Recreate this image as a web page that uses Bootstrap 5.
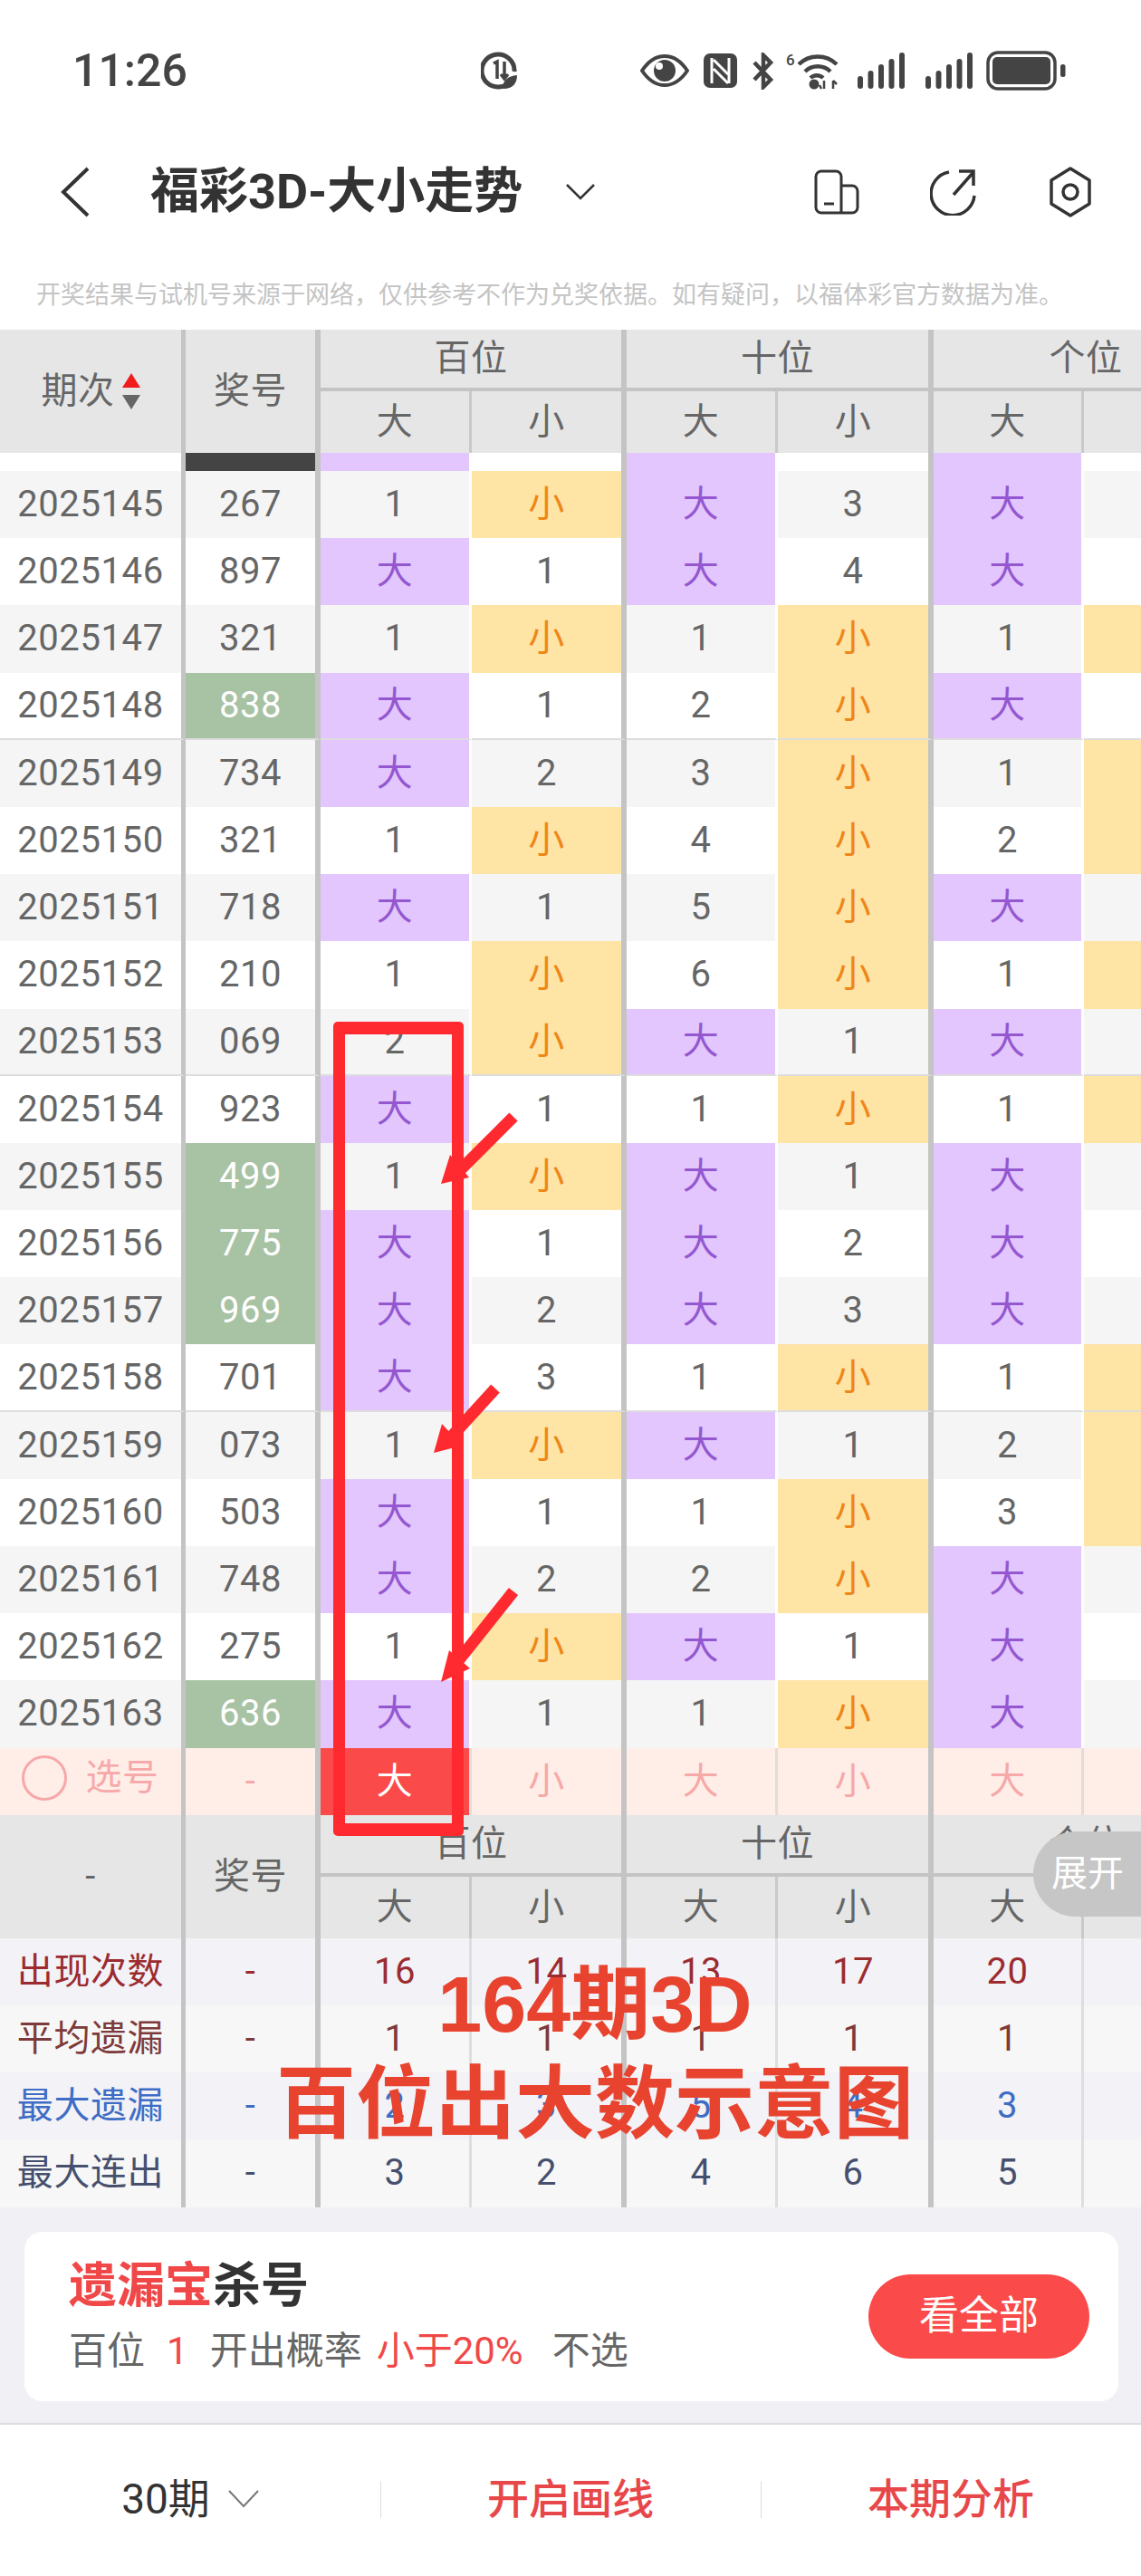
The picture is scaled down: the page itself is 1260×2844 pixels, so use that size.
<!DOCTYPE html>
<html lang="zh-CN">

<head>
  <meta charset="UTF-8">
  <meta name="viewport" content="width=device-width, initial-scale=1, shrink-to-fit=no">
  <title>福彩3D-大小走势</title>
  <link href="https://cdn.jsdelivr.net/npm/bootstrap@5.3.0/dist/css/bootstrap.min.css" rel="stylesheet">
  <style>
    body {
      font-family: Roboto, "Noto Sans CJK SC", sans-serif;
      background-color: #fff;
      color: #333;
    }

    .screen {
      position: relative;
      width: 1260px;
      height: 2844px;
      overflow: hidden;
    }

    /* status bar */
    .status-bar {
      height: 156px;
      padding-left: 80px;
      color: #444;
    }

    .status-time {
      font-size: 50px;
      font-weight: 500;
      line-height: 1;
      width: 451px;
    }

    .status-bar svg {
      display: block;
      flex: none;
    }

    /* nav bar */
    .top-nav {
      height: 112px;
      padding-left: 67px;
    }

    .top-title {
      font-size: 54px;
      font-weight: 700;
      line-height: 1;
      color: #333;
      margin-left: 67px;
      margin-right: 48px;
    }

    .top-actions {
      margin-left: auto;
      margin-right: 53px;
      gap: 78px;
    }

    .disclaimer {
      height: 96px;
      padding: 38px 0 18px 40px;
      font-size: 27px;
      line-height: 40px;
      color: #c4c4c4;
      white-space: nowrap;
    }

    /* trend table */
    .trend-wrap {
      width: 1260px;
      overflow: hidden;
    }

    .trend-table {
      width: 1367px;
      table-layout: fixed;
      border-collapse: separate;
      border-spacing: 0;
      font-size: 40px;
      line-height: 1;
      text-align: center;
      color: #666;
    }

    .trend-table th,
    .trend-table td {
      padding: 0;
      height: 74.2px;
      vertical-align: middle;
      text-align: center;
      font-weight: 400;
      color: #666;
      background-clip: padding-box;
      white-space: nowrap;
      letter-spacing: .6px;
    }

    .trend-table .edge-s { border-right: 5px solid #c4c4c4; }
    .trend-table .edge-m { border-right: 6px solid #c4c4c4; }
    .trend-table .edge-t { border-right: 3px solid transparent; }

    .trend-table th {
      background-color: #e6e6e6;
      height: 68px;
    }

    .trend-table th.edge-t { border-right-color: #c9c9c9; }
    .trend-table th.group-cell { border-bottom: 4px solid #c4c4c4; }
    .trend-table tr.row-gray td { background-color: #f5f5f5; }
    .trend-table tr.row-white td { background-color: #fff; }
    .trend-table tr.row-cut td { height: 20px; }
    .trend-table tr.row-end td { border-bottom: 2px solid #ddd; }
    .trend-table tr.row-pick td { background-color: #ffeee8; color: #f7a8a8; }
    .trend-table tr.row-pick td.edge-t { border-right-color: #e3dcd9; }
    .trend-table tr.row-s1 td { background-color: #f2f2f7; color: #9c2b2f; }
    .trend-table tr.row-s2 td { background-color: #f7f7f7; color: #7d3a3a; }
    .trend-table tr.row-s3 td { background-color: #f2f2f7; color: #3f6cc4; }
    .trend-table tr.row-s4 td { background-color: #f7f7f7; color: #46506e; }
    .trend-table tr.row-s1 td.edge-t,
    .trend-table tr.row-s2 td.edge-t,
    .trend-table tr.row-s3 td.edge-t,
    .trend-table tr.row-s4 td.edge-t { border-right-color: #dedede; }

    .trend-table tr td.cell-big { background-color: #e2c6fd; color: #9457d0; }
    .trend-table tr td.cell-small { background-color: #fee4a5; color: #ee8618; }
    .trend-table tr td.cell-green { background-color: #a8c2a4; color: #fff; }
    .trend-table tr td.cell-dark { background-color: #444; }
    .trend-table tr td.cell-picked { background-color: #fb4a4a; color: #fff; }

    .sort-arrows {
      gap: 8px;
      margin-left: 8px;
    }

    .tri-up {
      width: 0;
      height: 0;
      border-left: 10px solid transparent;
      border-right: 10px solid transparent;
      border-bottom: 16px solid #f01c1c;
    }

    .tri-down {
      width: 0;
      height: 0;
      border-left: 10px solid transparent;
      border-right: 10px solid transparent;
      border-top: 16px solid #666;
    }

    .pick-ring {
      width: 50px;
      height: 50px;
      border: 3px solid #f7a8a8;
      border-radius: 50%;
      margin-right: 20px;
    }

    /* kill number card */
    .kill-zone {
      height: 240px;
      padding: 27px 25px 0 27px;
      background-color: #f1f1f5;
      border-bottom: 2px solid #ddd;
    }

    .kill-card {
      height: 187px;
      padding: 0 32px 0 49px;
      border: 0;
      border-radius: 20px;
    }

    .kill-title {
      font-size: 53px;
      font-weight: 700;
      line-height: 1;
      color: #333;
      margin-bottom: 24px;
    }

    .kill-red { color: #f04848; }

    .kill-line {
      font-size: 42px;
      line-height: 1;
      color: #666;
      white-space: nowrap;
    }

    .kill-btn {
      width: 244px;
      height: 93px;
      padding: 0;
      font-size: 44px;
      line-height: 1;
      color: #fff;
      background-color: #fb4a4a;
      border: 0;
      border-radius: 47px;
    }

    /* footer */
    .bottom-bar {
      height: 165px;
    }

    .bottom-item {
      width: 420px;
      font-size: 46px;
      line-height: 1;
      font-weight: 500;
      color: #e8474a;
    }

    .bottom-item + .bottom-item::before {
      content: "";
      position: absolute;
      left: 0;
      top: 62px;
      height: 41px;
      border-left: 1px solid #ddd;
    }

    .bottom-period {
      font-weight: 400;
      color: #333;
      gap: 20px;
    }

    /* things laid over the page */
    .expand-tag {
      position: absolute;
      left: 1141px;
      top: 2022px;
      width: 119px;
      height: 94px;
      padding-left: 20px;
      font-size: 40px;
      line-height: 94px;
      color: #fff;
      background-color: #c6c6c6;
      border-radius: 47px 0 0 47px;
    }

    .mark-box {
      position: absolute;
      left: 368px;
      top: 1128px;
      width: 144px;
      height: 899px;
      border: 14px solid #ff2a30;
      border-width: 14px 13px;
      border-radius: 5px;
    }

    .mark-arrows {
      position: absolute;
      left: 0;
      top: 0;
    }

    .mark-text {
      position: absolute;
      left: 0;
      top: 2158px;
      width: 1314px;
      font-size: 88px;
      font-weight: 700;
      line-height: 110px;
      text-align: center;
      color: #e8432f;
      font-family: "Liberation Sans", "Noto Sans CJK SC", sans-serif;
    }
  </style>
</head>

<body>
  <div class="screen">

    <!-- status bar -->
    <div class="status-bar d-flex align-items-center">
      <div class="status-time">11:26</div>
      <svg width="41" height="42" viewBox="0 0 41 42">
        <path d="M29 36A18 18 0 1 1 37 22" fill="none" stroke="#444" stroke-width="5"/>
        <path d="M14 13l4-2v19M26 11v18M22 25l4 5 4-5" fill="none" stroke="#444" stroke-width="3.5"/>
        <path d="M25 41c-2-9 5-14 15-15 0 9-5 15-15 15z" fill="#444"/>
      </svg>
      <svg class="ms-auto" style="margin-left:135px!important" width="54" height="36" viewBox="0 0 54 36">
        <path d="M2 18C10 6 18 2 27 2s17 4 25 16c-8 12-16 16-25 16S10 30 2 18z" fill="none" stroke="#444" stroke-width="4"/>
        <circle cx="27" cy="18" r="12" fill="#444"/>
        <circle cx="21" cy="13" r="4" fill="#fff"/>
      </svg>
      <svg style="margin-left:16px" width="37" height="38" viewBox="0 0 37 38">
        <rect width="37" height="38" rx="7" fill="#444"/>
        <path d="M9 5v28M28 5v28M11 7l16 16M11 17l16 16" fill="none" stroke="#fff" stroke-width="3"/>
      </svg>
      <svg style="margin-left:16px" width="26" height="41" viewBox="0 0 26 41">
        <path d="M3 30L21 11 13 3v35l8-8L3 11" fill="none" stroke="#444" stroke-width="4.5"/>
      </svg>
      <svg style="margin-left:12px" width="58" height="42" viewBox="0 0 58 42">
        <path d="M14 14a30 30 0 0 1 42 0M21 22a20 20 0 0 1 28 0M27 29a10 10 0 0 1 14 0" fill="none" stroke="#444" stroke-width="4.5"/>
        <circle cx="31" cy="36" r="5.5" fill="#444"/>
        <path d="M42 32v9M39 41l-2-4M52 32v9M52 32l4 4" fill="none" stroke="#444" stroke-width="2.5"/>
        <text x="0" y="15" font-size="17" font-family="Roboto" font-weight="500" fill="#444">6</text>
      </svg>
      <svg style="margin-left:21px" width="52" height="40" viewBox="0 0 52 40">
        <rect x="0" y="26" width="6" height="14" rx="3" fill="#444"/>
        <rect x="11.500" y="20" width="6" height="20" rx="3" fill="#444"/>
        <rect x="23" y="13" width="6" height="27" rx="3" fill="#444"/>
        <rect x="34.500" y="7" width="6" height="33" rx="3" fill="#444"/>
        <rect x="46" y="0" width="6" height="40" rx="3" fill="#444"/>
      </svg>
      <svg style="margin-left:23px" width="52" height="40" viewBox="0 0 52 40">
        <rect x="0" y="26" width="6" height="14" rx="3" fill="#444"/>
        <rect x="11.500" y="20" width="6" height="20" rx="3" fill="#444"/>
        <rect x="23" y="13" width="6" height="27" rx="3" fill="#444"/>
        <rect x="34.500" y="7" width="6" height="33" rx="3" fill="#444"/>
        <rect x="46" y="0" width="6" height="40" rx="3" fill="#444"/>
      </svg>
      <svg style="margin-left:15px" width="88" height="44" viewBox="0 0 88 44">
        <rect x="2" y="2" width="74" height="40" rx="11" fill="none" stroke="#444" stroke-width="3.500"/>
        <rect x="7" y="7" width="64" height="30" rx="5" fill="#444"/>
        <rect x="82" y="15" width="5.500" height="14" rx="2.500" fill="#444"/>
      </svg>
    </div>

    <!-- nav bar -->
    <div class="top-nav d-flex align-items-center">
      <svg width="32" height="56" viewBox="0 0 32 56">
        <path d="M30 2L3 28l27 26" fill="none" stroke="#333" stroke-width="4"/>
      </svg>
      <div class="top-title">福彩3D-大小走势</div>
      <svg width="32" height="18" viewBox="0 0 32 18">
        <path d="M1 1l15 15L31 1" fill="none" stroke="#333" stroke-width="2.500"/>
      </svg>
      <div class="top-actions d-flex align-items-center">
        <svg width="50" height="50" viewBox="0 0 50 50">
          <path d="M8 2h16a6 6 0 0 1 6 6v40H8a6 6 0 0 1-6-6V8a6 6 0 0 1 6-6zM30 18h12a6 6 0 0 1 6 6v18a6 6 0 0 1-6 6H30" fill="none" stroke="#333" stroke-width="3"/>
          <path d="M11 38h11" stroke="#333" stroke-width="3"/>
        </svg>
        <svg width="52" height="52" viewBox="0 0 52 52">
          <path d="M21 4A24 24 0 1 0 49 30M26 29L48 4M32 3h16v16" fill="none" stroke="#333" stroke-width="3.500"/>
        </svg>
        <svg width="50" height="56" viewBox="0 0 50 56">
          <path d="M25 2l21 13v26L25 54 4 41V15z" fill="none" stroke="#333" stroke-width="3.500" stroke-linejoin="round"/>
          <circle cx="25" cy="28" r="8" fill="none" stroke="#333" stroke-width="3.500"/>
        </svg>
      </div>
    </div>

    <div class="disclaimer">开奖结果与试机号来源于网络，仅供参考不作为兑奖依据。如有疑问，以福体彩官方数据为准。</div>

    <!-- table gets filled by the script below -->
    <div class="trend-wrap">
      <table class="table table-borderless mb-0 trend-table" id="trendTable"></table>
    </div>

    <!-- kill number card -->
    <div class="kill-zone">
      <div class="card kill-card flex-row align-items-center justify-content-between">
        <div>
          <div class="kill-title"><span class="kill-red">遗漏宝</span>杀号</div>
          <div class="kill-line d-flex">
            <span>百位</span>
            <span class="kill-red ms-4 me-4">1</span>
            <span>开出概率</span>
            <span class="kill-red ms-3">小于20%</span>
            <span class="ms-4 ps-2">不选</span>
          </div>
        </div>
        <button type="button" class="btn kill-btn">看全部</button>
      </div>
    </div>

    <!-- footer -->
    <div class="bottom-bar d-flex">
      <div class="bottom-item bottom-period d-flex align-items-center justify-content-center">
        <span>30期</span>
        <svg width="34" height="20" viewBox="0 0 34 20">
          <path d="M1 1l16 17L33 1" fill="none" stroke="#777" stroke-width="2"/>
        </svg>
      </div>
      <div class="bottom-item position-relative d-flex align-items-center justify-content-center">开启画线</div>
      <div class="bottom-item position-relative d-flex align-items-center justify-content-center">本期分析</div>
    </div>

    <!-- sidebar tag and the hand-drawn marks on top of the screenshot -->
    <div class="expand-tag">展开</div>
    <div class="mark-box"></div>
    <svg class="mark-arrows" width="1260" height="2844" viewBox="0 0 1260 2844">
      <g fill="none" stroke="#ff2a30" stroke-width="13">
        <path d="M567 1233L505 1295"/>
        <path d="M547 1533L495 1590"/>
        <path d="M567 1757L505 1835"/>
      </g>
      <g fill="#ff2a30">
        <path d="M487 1307L497 1275 518 1300z"/>
        <path d="M479 1604L488 1572 510 1596z"/>
        <path d="M487 1857L496 1822 519 1842z"/>
      </g>
    </svg>
    <div class="mark-text">164期3D<br>百位出大数示意图</div>
  </div>

  <script src="https://cdn.jsdelivr.net/npm/bootstrap@5.3.0/dist/js/bootstrap.bundle.min.js"></script>
  <script>
    // period, prize, green?, then hundreds big/small, tens big/small, ones big/small
    var trendRows = [
      ['2025145', '267', 0, '1', '小', '大', '3', '大', '1'],
      ['2025146', '897', 0, '大', '1', '大', '4', '大', '2'],
      ['2025147', '321', 0, '1', '小', '1', '小', '1', '小'],
      ['2025148', '838', 1, '大', '1', '2', '小', '大', '1'],
      ['2025149', '734', 0, '大', '2', '3', '小', '1', '小'],
      ['2025150', '321', 0, '1', '小', '4', '小', '2', '小'],
      ['2025151', '718', 0, '大', '1', '5', '小', '大', '1'],
      ['2025152', '210', 0, '1', '小', '6', '小', '1', '小'],
      ['2025153', '069', 0, '2', '小', '大', '1', '大', '1'],
      ['2025154', '923', 0, '大', '1', '1', '小', '1', '小'],
      ['2025155', '499', 1, '1', '小', '大', '1', '大', '1'],
      ['2025156', '775', 1, '大', '1', '大', '2', '大', '2'],
      ['2025157', '969', 1, '大', '2', '大', '3', '大', '3'],
      ['2025158', '701', 0, '大', '3', '1', '小', '1', '小'],
      ['2025159', '073', 0, '1', '小', '大', '1', '2', '小'],
      ['2025160', '503', 0, '大', '1', '1', '小', '3', '小'],
      ['2025161', '748', 0, '大', '2', '2', '小', '大', '1'],
      ['2025162', '275', 0, '1', '小', '大', '1', '大', '2'],
      ['2025163', '636', 1, '大', '1', '1', '小', '大', '3']
    ];

    var statRows = [
      ['row-s1', '出现次数', '16', '14', '13', '17', '20', '10'],
      ['row-s2', '平均遗漏', '1', '1', '1', '1', '1', '1'],
      ['row-s3', '最大遗漏', '2', '3', '5', '4', '3', '4'],
      ['row-s4', '最大连出', '3', '2', '4', '6', '5', '3']
    ];

    var valueEdges = ['edge-t', 'edge-m', 'edge-t', 'edge-m', 'edge-t', ''];

    function headRows(firstCell) {
      return `
        <tr>
          ${firstCell}
          <th rowspan="2" class="edge-m">奖号</th>
          <th colspan="2" class="edge-m group-cell">百位</th>
          <th colspan="2" class="edge-m group-cell">十位</th>
          <th colspan="2" class="group-cell">个位</th>
        </tr>
        <tr>
          <th class="edge-t">大</th><th class="edge-m">小</th>
          <th class="edge-t">大</th><th class="edge-m">小</th>
          <th class="edge-t">大</th><th>小</th>
        </tr>`;
    }

    function valueCell(value, index) {
      var cls = valueEdges[index];
      if (value === '大') cls += ' cell-big';
      if (value === '小') cls += ' cell-small';
      return `<td class="${cls}">${value}</td>`;
    }

    var htmlString = `<colgroup>
        <col style="width:205px"><col style="width:149px"><col style="width:167px"><col style="width:171px">
        <col style="width:167px"><col style="width:172px"><col style="width:166px"><col style="width:170px">
      </colgroup><thead>`;
    htmlString += headRows(`<th rowspan="2" class="edge-s"><span class="d-inline-flex align-items-center">期次<span class="sort-arrows d-inline-flex flex-column"><i class="tri-up"></i><i class="tri-down"></i></span></span></th>`);
    htmlString += '</thead><tbody>';

    // the row that is half hidden under the header
    htmlString += `<tr class="row-white row-cut"><td class="edge-s"></td><td class="edge-m cell-dark"></td>
      <td class="edge-t cell-big"></td><td class="edge-m"></td><td class="edge-t cell-big"></td><td class="edge-m"></td><td class="edge-t cell-big"></td><td></td></tr>`;

    for (var i = 0; i < trendRows.length; i++) {
      var row = trendRows[i];
      var rowClass = i % 2 === 0 ? 'row-gray' : 'row-white';
      if (row[0] === '2025148' || row[0] === '2025153' || row[0] === '2025158') rowClass += ' row-end';
      htmlString += `<tr class="${rowClass}"><td class="edge-s">${row[0]}</td><td class="edge-m ${row[2] ? 'cell-green' : ''}">${row[1]}</td>`;
      for (var j = 0; j < 6; j++) {
        htmlString += valueCell(row[3 + j], j);
      }
      htmlString += '</tr>';
    }

    // pick row
    htmlString += `<tr class="row-pick">
      <td class="edge-s"><span class="d-inline-flex align-items-center"><i class="pick-ring"></i>选号</span></td>
      <td class="edge-m">-</td>
      <td class="edge-t cell-picked">大</td><td class="edge-m">小</td>
      <td class="edge-t">大</td><td class="edge-m">小</td>
      <td class="edge-t">大</td><td>小</td>
    </tr>`;

    htmlString += headRows(`<th rowspan="2" class="edge-s">-</th>`);

    for (var k = 0; k < statRows.length; k++) {
      var stat = statRows[k];
      htmlString += `<tr class="${stat[0]}"><td class="edge-s">${stat[1]}</td><td class="edge-m">-</td>`;
      for (var m = 0; m < 6; m++) {
        htmlString += `<td class="${valueEdges[m]}">${stat[2 + m]}</td>`;
      }
      htmlString += '</tr>';
    }
    htmlString += '</tbody>';
    document.getElementById('trendTable').innerHTML = htmlString;
  </script>
</body>

</html>
